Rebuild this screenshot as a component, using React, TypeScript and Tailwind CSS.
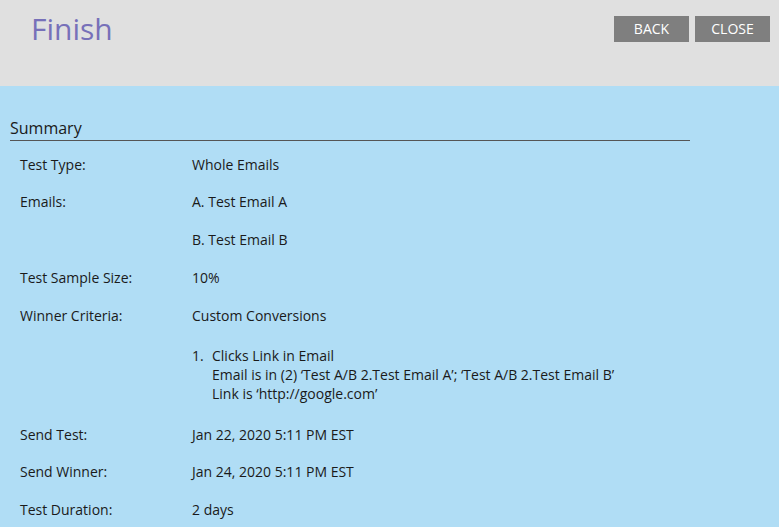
const Row = ({ label, children, className = "py-[9px]" }: { label?: string; children: React.ReactNode; className?: string }) => (
  <div className={`flex ${className}`}>
    <div className="w-[172px] shrink-0">{label}</div>
    <div>{children}</div>
  </div>
);

const App = () => {
  return (
    <div
      className="w-[779px] h-[527px] overflow-hidden bg-[#b0ddf5] text-[#1a1a1a]"
      style={{ fontFamily: '"Open Sans", "Liberation Sans", sans-serif' }}
    >
      <header className="h-[86px] bg-[#e0e0e0] flex justify-between pl-[31px] pr-[9px]">
        <h1 className="text-[30px] leading-none text-[#7770b9] pt-[14px]">Finish</h1>
        <div className="flex gap-[6px] pt-[16px]">
          <button className="w-[75px] h-[26px] bg-[#7f7f7f] text-white text-[14px] leading-[26px]">BACK</button>
          <button className="w-[75px] h-[26px] bg-[#7f7f7f] text-white text-[14px] leading-[26px]">CLOSE</button>
        </div>
      </header>

      <main className="pl-[10px] pt-[31px]">
        <section className="w-[680px]">
          <h2 className="text-[16px] leading-[22px] border-b border-[#555] pb-[1px]">Summary</h2>
          <div className="pl-[10px] pt-[5px] text-[14px] leading-[20px]">
            <Row label="Test Type:" className="pt-[9px] pb-[8px]">Whole Emails</Row>
            <Row label="Emails:">A. Test Email A</Row>
            <Row>B. Test Email B</Row>
            <Row label="Test Sample Size:">10%</Row>
            <Row label="Winner Criteria:">Custom Conversions</Row>
            <Row className="pt-[11px] pb-[13px]">
              <div className="flex leading-[19px]">
                <span className="w-[20px]">1.</span>
                <div>
                  <div>Clicks Link in Email</div>
                  <div>Email is in (2) ‘Test A/B 2.Test Email A’; ‘Test A/B 2.Test Email B’</div>
                  <div>Link is ‘http://google.com’</div>
                </div>
              </div>
            </Row>
            <Row label="Send Test:" className="pt-[9px] pb-[8px]">Jan 22, 2020 5:11 PM EST</Row>
            <Row label="Send Winner:">Jan 24, 2020 5:11 PM EST</Row>
            <Row label="Test Duration:">2 days</Row>
          </div>
        </section>
      </main>
    </div>
  );
};

export default App;
